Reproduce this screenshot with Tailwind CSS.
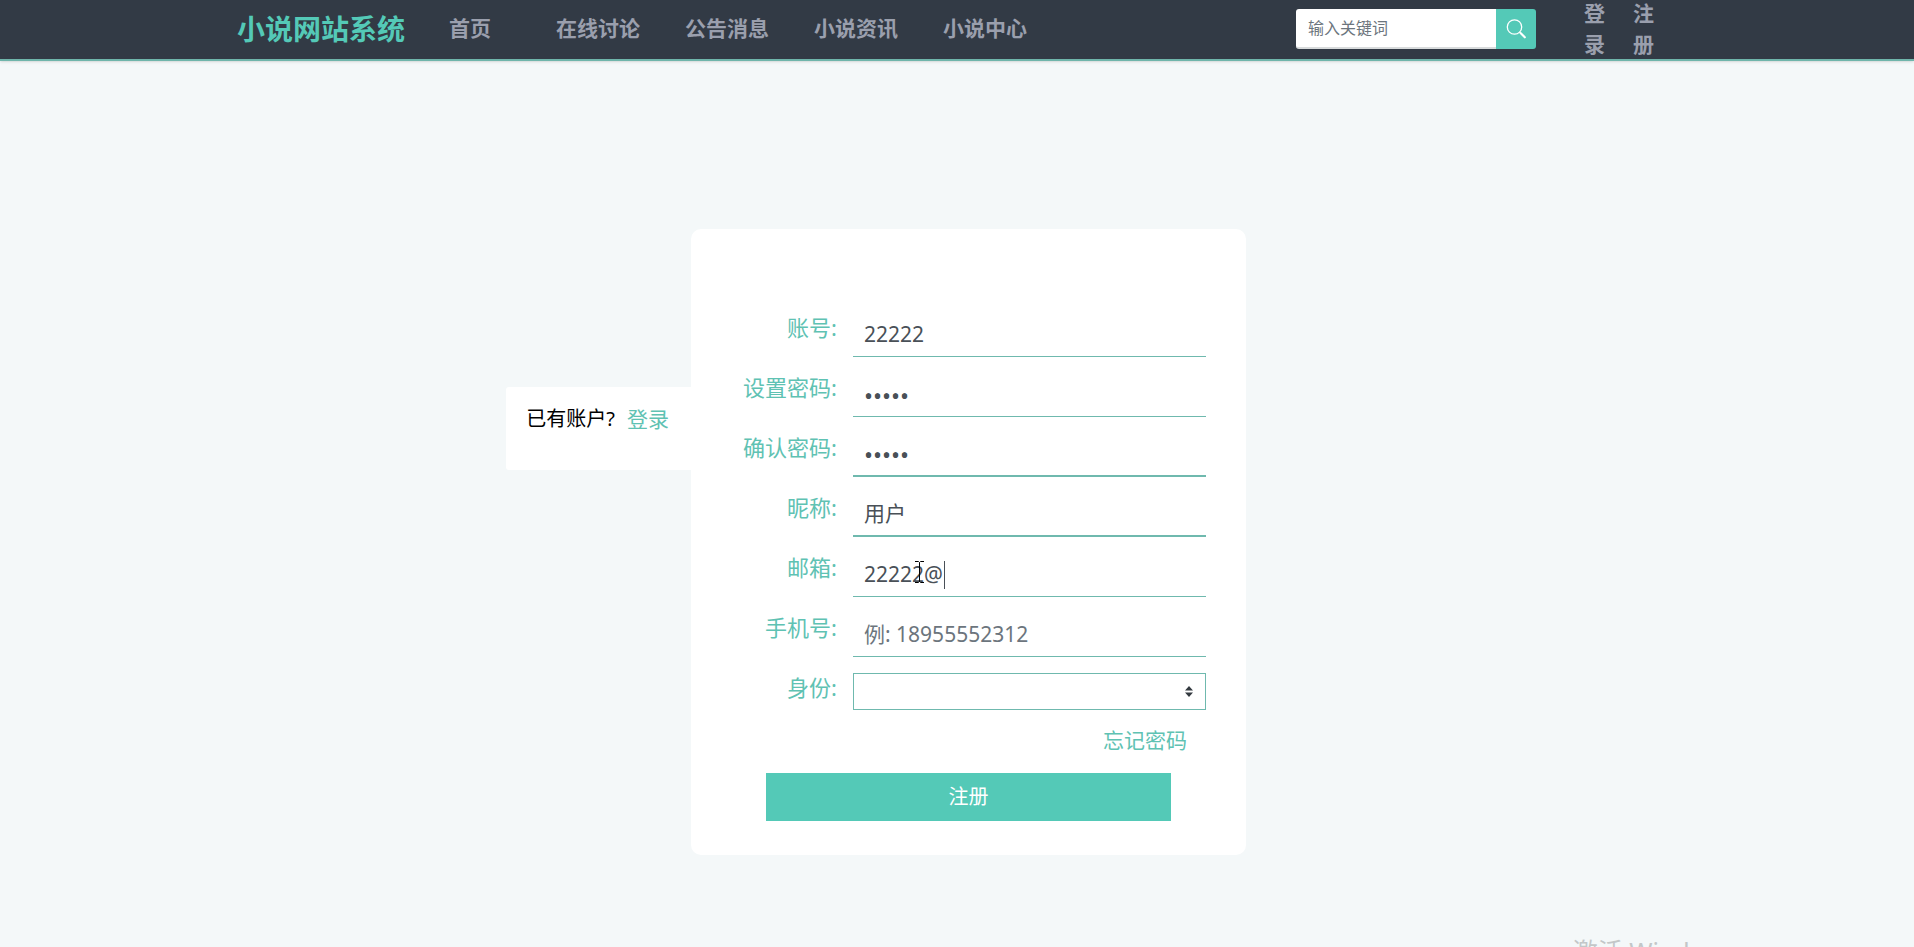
<!DOCTYPE html>
<html lang="zh-CN">
<head>
    <meta charset="UTF-8">
    <meta name="viewport" content="width=device-width, initial-scale=1.0">
    <title>小说网站系统</title>
    <script src="https://cdn.jsdelivr.net/npm/@tailwindcss/browser@4"></script>
</head>
<body class="relative min-h-screen overflow-hidden bg-[#f4f8f9] font-['Noto_Sans','Noto_Sans_CJK_SC',sans-serif] text-[21px]">
    <!-- Navbar -->
    <header class="bg-[#323a45] border-b-2 border-[#6fb5ab] shadow-sm">
        <div class="mx-auto flex h-[59px] max-w-[1440px] items-center pr-[23px] pb-0.5">
            <a href="#" class="mr-11 text-[28px] leading-none font-bold text-[#54c9b7]">小说网站系统</a>
            <nav class="flex gap-[45px] text-[21px] leading-[31px] font-bold text-[#9a9fad]">
                <a href="#" class="mr-5">首页</a>
                <a href="#">在线讨论</a>
                <a href="#">公告消息</a>
                <a href="#">小说资讯</a>
                <a href="#">小说中心</a>
            </nav>
            <form class="ml-auto flex h-10">
                <input type="text" aria-label="输入关键词" placeholder="输入关键词" class="w-[200px] rounded-l-[3px] border-b-2 border-[#d8dbdc] bg-white px-3 text-base text-gray-700 outline-none placeholder:text-[#6c757d]">
                <button type="button" aria-label="搜索" class="flex w-10 items-center justify-center rounded-r-[3px] bg-[#54c9b7] text-white">
                    <svg class="h-5 w-5" viewBox="0 0 20 20" fill="none" stroke="currentColor">
                        <circle cx="8.500" cy="8" r="7.200" stroke-width="1.300"/>
                        <path d="M13.500 13l1.500 1.500" stroke-width="1.300"/>
                        <path d="M14.800 14.300l4 4" stroke-width="2.200" stroke-linecap="round"/>
                    </svg>
                </button>
            </form>
            <div class="ml-12 flex gap-7 text-[21px] leading-[31px] font-bold text-[#9a9fad]">
                <a href="#" class="w-[21px]">登录</a>
                <a href="#" class="w-[21px]">注册</a>
            </div>
        </div>
    </header>

    <!-- Register -->
    <main class="grid grid-cols-[1fr_555px_1fr] items-start pt-[168px] pl-[23px]">
        <div class="mt-[158px] flex h-[83px] items-start gap-3 justify-self-end rounded-l-[3px] bg-white pt-4 pr-[22px] pl-5 text-xl leading-8">
            <span class="text-black">已有账户?</span>
            <a href="#" class="text-[21px] text-[#5fc2b3]">登录</a>
        </div>

        <form class="rounded-[10px] bg-white pt-20 pb-[34px]">
            <div class="flex flex-col gap-3 pr-10">
                <div class="grid h-12 grid-cols-[146px_1fr] gap-4">
                    <label for="account" class="text-right text-[22px] leading-9 text-[#5fc2b3]">账号:</label>
                    <input id="account" type="text" value="22222" class="min-w-0 border-b border-[#6fb9ae] px-[11px] pt-1 text-[21px] text-[#495057] outline-none">
                </div>
                <div class="grid h-12 grid-cols-[146px_1fr] gap-4">
                    <label for="password" class="text-right text-[22px] leading-9 text-[#5fc2b3]">设置密码:</label>
                    <input id="password" type="password" value="22222" class="min-w-0 border-b border-[#6fb9ae] px-[11px] pt-1.5 text-2xl text-[#495057] outline-none">
                </div>
                <div class="grid h-12 grid-cols-[146px_1fr] gap-4">
                    <label for="confirm" class="text-right text-[22px] leading-9 text-[#5fc2b3]">确认密码:</label>
                    <input id="confirm" type="password" value="22222" class="min-w-0 border-b-2 border-[#6fb9ae] px-[11px] pt-1.5 text-2xl text-[#495057] outline-none">
                </div>
                <div class="grid h-12 grid-cols-[146px_1fr] gap-4">
                    <label for="nickname" class="text-right text-[22px] leading-9 text-[#5fc2b3]">昵称:</label>
                    <input id="nickname" type="text" value="用户" class="min-w-0 border-b-2 border-[#6fb9ae] px-[11px] pt-1 text-[21px] text-[#495057] outline-none">
                </div>
                <div class="relative grid h-12 grid-cols-[146px_1fr] gap-4">
                    <label for="email" class="text-right text-[22px] leading-9 text-[#5fc2b3]">邮箱:</label>
                    <input id="email" type="text" value="22222@" class="min-w-0 border-b border-[#6fb9ae] px-[11px] pt-1 text-[21px] text-[#495057] outline-none">
                    <!-- text caret and mouse pointer -->
                    <span class="absolute top-3 left-[253px] h-7 w-px bg-[#495057]"></span>
                    <svg class="absolute top-3 left-[224px] h-[22px] w-[9px]" viewBox="0 0 9 22" fill="none" stroke="#000">
                        <path d="M0 .5h3.500l1 1l1-1H9M4.500 1.500v19M0 21.500h3.500l1-1l1 1H9"/>
                    </svg>
                </div>
                <div class="grid h-12 grid-cols-[146px_1fr] gap-4">
                    <label for="phone" class="text-right text-[22px] leading-9 text-[#5fc2b3]">手机号:</label>
                    <input id="phone" type="text" placeholder="例: 18955552312" class="min-w-0 border-b border-[#6fb9ae] px-[11px] pt-1 text-[21px] text-[#495057] outline-none placeholder:text-[#6c757d]">
                </div>
                <div class="grid h-12 grid-cols-[146px_1fr] gap-4">
                    <label for="role" class="text-right text-[22px] leading-9 text-[#5fc2b3]">身份:</label>
                    <div class="relative pt-1">
                        <select id="role" class="block h-[37px] w-full appearance-none border border-[#6fb9ae] bg-white px-[11px] outline-none">
                            <option></option>
                            <option>用户</option>
                        </select>
                        <svg class="pointer-events-none absolute top-[17px] right-[13px] h-[11px] w-2" viewBox="0 0 8 11">
                            <path fill="#343a40" d="M4 0L0 4.500h8zM4 11L0 6.500h8z"/>
                        </svg>
                    </div>
                </div>
            </div>
            <div class="mt-2 pr-[59px] text-right leading-[30px]">
                <a href="#" class="text-[#5fc2b3]">忘记密码</a>
            </div>
            <button type="button" class="mx-auto mt-[18px] block h-12 w-[405px] bg-[#54c9b7] text-xl text-white">注册</button>
        </form>
    </main>

    <!-- Watermark cut off by the window edge -->
    <div class="absolute right-[178px] -bottom-[22px] text-[25px] leading-9 text-[#c3c7c8]">激活 Windows</div>
</body>
</html>
